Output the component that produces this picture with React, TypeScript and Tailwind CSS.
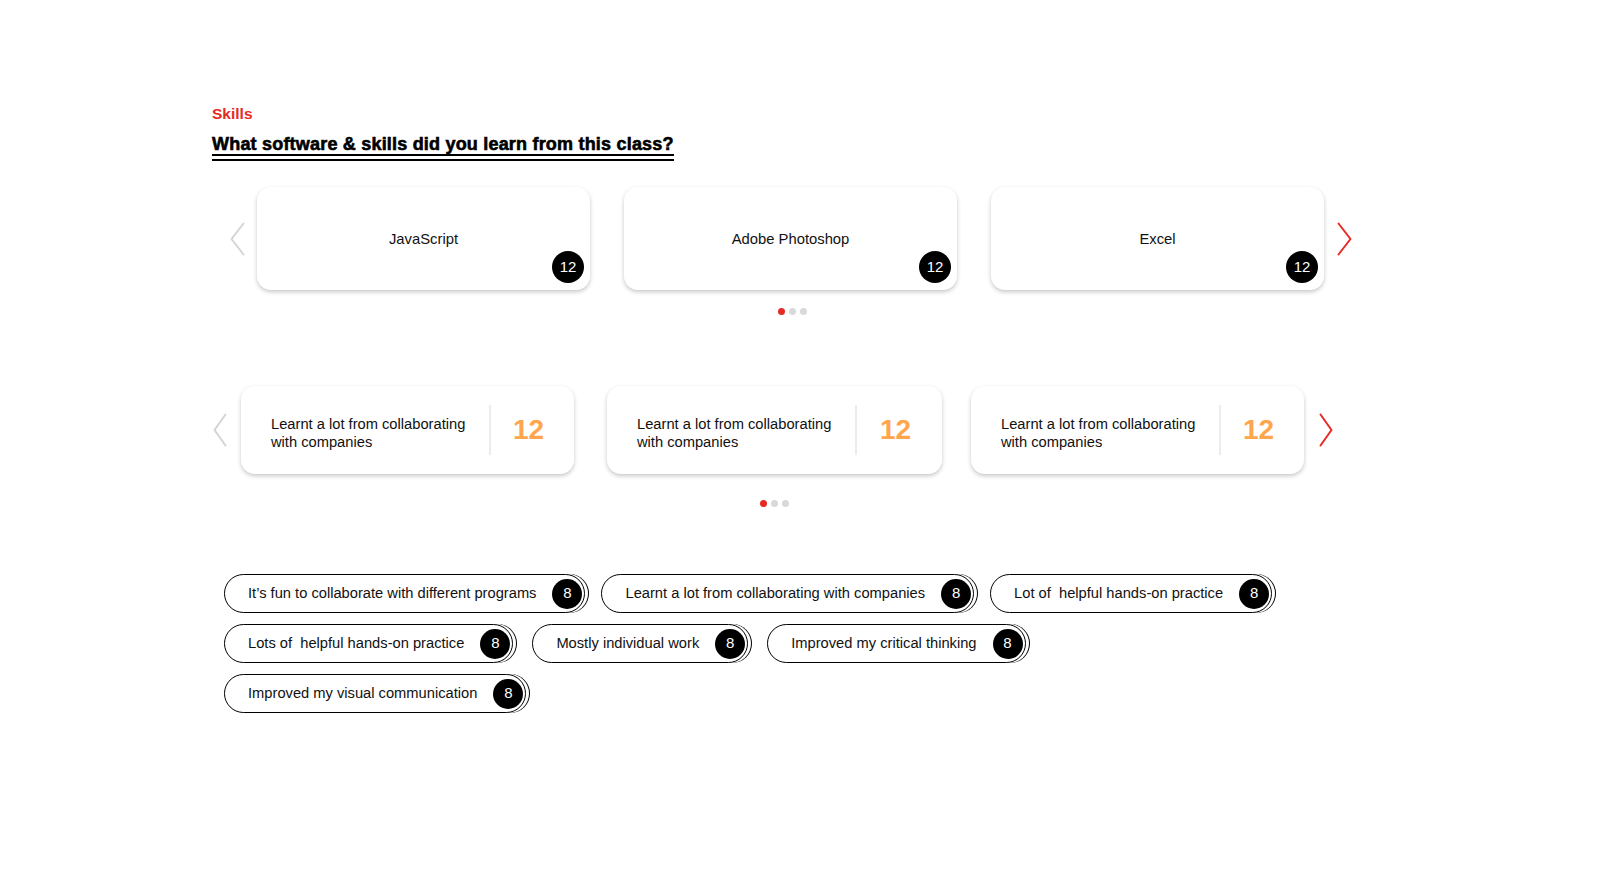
import React from "react";

const RED = "#e62a24";

function Chevron({ dir, color, w, h }: { dir: "left" | "right"; color: string; w: number; h: number }) {
  const d = dir === "left" ? `M${w - 1.5} 1.5 L1.5 ${h / 2} L${w - 1.5} ${h - 1.5}` : `M1.5 1.5 L${w - 1.5} ${h / 2} L1.5 ${h - 1.5}`;
  return (
    <svg width={w} height={h} viewBox={`0 0 ${w} ${h}`} fill="none" className="shrink-0">
      <path d={d} stroke={color} strokeWidth="2" strokeLinecap="round" strokeLinejoin="round" />
    </svg>
  );
}

function Dots({ className }: { className: string }) {
  return (
    <div className={`flex justify-center gap-[4px] ${className}`}>
      <span className="w-[7px] h-[7px] rounded-full bg-[#e62a24]" />
      <span className="w-[7px] h-[7px] rounded-full bg-[#d9d9d9]" />
      <span className="w-[7px] h-[7px] rounded-full bg-[#d9d9d9]" />
    </div>
  );
}

function SkillCard({ label }: { label: string }) {
  return (
    <div className="relative w-[333px] h-[103px] shrink-0 rounded-[14px] bg-white shadow-[0_2px_4px_rgba(0,0,0,0.22)] flex items-center justify-center">
      <span className="text-[14.8px] text-[#111] mt-[2px]">{label}</span>
      <span className="absolute right-[6px] bottom-[7px] w-[32px] h-[32px] rounded-full bg-black text-white text-[15px] flex items-center justify-center">
        12
      </span>
    </div>
  );
}

function FeedbackCard({ w, className = "" }: { w: string; className?: string }) {
  return (
    <div className={`${w} h-[88px] shrink-0 rounded-[14px] bg-white shadow-[0_2px_4px_rgba(0,0,0,0.22)] flex items-center pl-[30px] pr-[8px] ${className}`}>
      <div className="w-[218px] shrink-0 text-[14.7px] leading-[17.5px] text-[#111] mt-[7px]">
        Learnt a lot from collaborating with companies
      </div>
      <div className="w-[2px] h-[50px] bg-[#ececec] shrink-0" />
      <div className="flex-1 text-center text-[28px] font-bold text-[#ffa54c] leading-none">12</div>
    </div>
  );
}

function Pill({ label }: { label: string }) {
  return (
    <div className="h-[39px] flex items-center border border-black rounded-full bg-white pl-[23px] pr-[2px] gap-[16px] shadow-[3px_0_0_0_#fff,4px_0_0_0_#000]">
      <span className="text-[14.7px] text-[#111] whitespace-pre">{label}</span>
      <span className="w-[30px] h-[30px] rounded-full bg-black text-white text-[15px] flex items-center justify-center">8</span>
    </div>
  );
}

export default function App() {
  return (
    <div className="w-[1620px] h-[875px] bg-white overflow-hidden [font-family:'Liberation_Sans',Arial,sans-serif]">
      <div className="pt-[105px] pl-[212px] flex flex-col items-start">
        <div className="text-[15.5px] leading-[18px] font-bold text-[#e62a24]">Skills</div>
        <div className="mt-[11px] flex flex-col">
          <div className="text-[18px] leading-[20px] font-bold text-black tracking-[0.2px] [-webkit-text-stroke:0.6px_black] whitespace-nowrap">
            What software &amp; skills did you learn from this class?
          </div>
          <div className="h-[2px] bg-black" />
          <div className="h-[2px] bg-black mt-[3px]" />
        </div>

        {/* Row 1 */}
        <div className="mt-[26px] ml-[18px] flex items-center">
          <Chevron dir="left" color="#d4d4d4" w={15} h={34} />
          <div className="ml-[12px] flex gap-[34px]">
            <SkillCard label="JavaScript" />
            <SkillCard label="Adobe Photoshop" />
            <SkillCard label="Excel" />
          </div>
          <div className="ml-[13px]">
            <Chevron dir="right" color={RED} w={15} h={34} />
          </div>
        </div>
        <Dots className="mt-[18px] ml-[47px] w-[1067px]" />

        {/* Row 2 */}
        <div className="mt-[71px] ml-[1px] flex items-center">
          <Chevron dir="left" color="#d4d4d4" w={14} h={34} />
          <div className="ml-[14px] flex">
            <FeedbackCard w="w-[333px]" />
            <FeedbackCard w="w-[335px]" className="ml-[33px]" />
            <FeedbackCard w="w-[333px]" className="ml-[29px]" />
          </div>
          <div className="ml-[15px]">
            <Chevron dir="right" color={RED} w={14} h={34} />
          </div>
        </div>
        <Dots className="mt-[26px] ml-[31px] w-[1063px]" />

        {/* Pills */}
        <div className="mt-[67px] ml-[12px] flex flex-col gap-[11px]">
          <div className="flex gap-[16px]">
            <Pill label="It’s fun to collaborate with different programs" />
            <Pill label="Learnt a lot from collaborating with companies" />
            <Pill label="Lot of  helpful hands-on practice" />
          </div>
          <div className="flex gap-[19px]">
            <Pill label="Lots of  helpful hands-on practice" />
            <Pill label="Mostly individual work" />
            <Pill label="Improved my critical thinking" />
          </div>
          <div className="flex gap-[19px]">
            <Pill label="Improved my visual communication" />
          </div>
        </div>
      </div>
    </div>
  );
}
